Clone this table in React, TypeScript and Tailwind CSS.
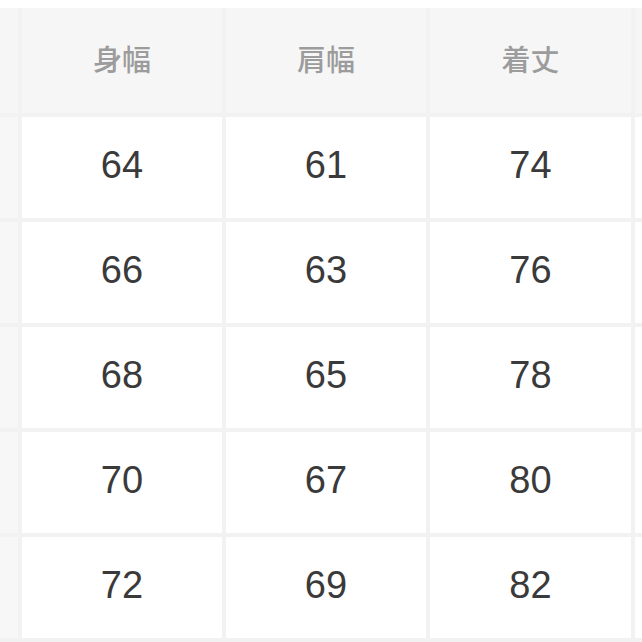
const headers = ["", "身幅", "肩幅", "着丈", ""];

const rows = [
  ["64", "61", "74"],
  ["66", "63", "76"],
  ["68", "65", "78"],
  ["70", "67", "80"],
  ["72", "69", "82"],
];

export default function App() {
  return (
    <div className="w-[642px] h-[642px] overflow-hidden bg-white pt-2">
      <div className="grid grid-cols-[18px_200px_200px_201px_1fr] grid-rows-[105px_repeat(5,101px)] gap-[4px] bg-[#f2f2f2] pb-1">
        {headers.map((h, i) => (
          <div
            key={`h${i}`}
            className="flex items-center justify-center bg-[#f6f6f6] pb-1 text-[29px] font-medium text-[#9c9c9c] [font-family:'Noto_Sans_CJK_JP',sans-serif]"
          >
            {h}
          </div>
        ))}
        {rows.map((r, ri) => (
          <>
            <div key={`l${ri}`} className="bg-[#f7f7f7]" />
            {r.map((v, ci) => (
              <div
                key={`c${ri}-${ci}`}
                className="flex items-center justify-center bg-white pb-1 text-[38px] text-[#3a3a3a] [font-family:'Liberation_Sans',Arial,sans-serif]"
              >
                {v}
              </div>
            ))}
            <div key={`r${ri}`} className="bg-white" />
          </>
        ))}
      </div>
    </div>
  );
}
